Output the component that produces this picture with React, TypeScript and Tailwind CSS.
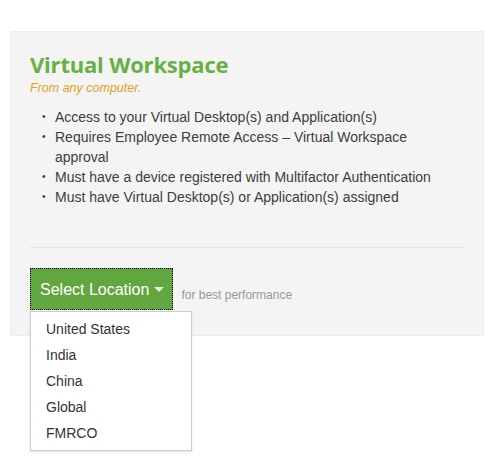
const items = [
  "Access to your Virtual Desktop(s) and Application(s)",
  "Requires Employee Remote Access \u2013 Virtual Workspace approval",
  "Must have a device registered with Multifactor Authentication",
  "Must have Virtual Desktop(s) or Application(s) assigned",
];

const locations = ["United States", "India", "China", "Global", "FMRCO"];

export default function App() {
  return (
    <div className="w-[501px] h-[458px] bg-white pt-[31px] pl-[10px] font-['Liberation_Sans',Arial,sans-serif]">
      <div className="relative w-[474px] h-[305px] bg-[#f4f4f4] border border-[#ececec] px-[19px] pt-[17px]">
        <h2 className="font-['Open_Sans',sans-serif] font-bold text-[22px] leading-[30px] text-[#66b144] tracking-[-0.2px]">
          Virtual Workspace
        </h2>
        <div className="italic text-[12.5px] leading-[14px] text-[#e5a01b] mt-[2px]">From any computer.</div>

        <ul className="mt-[12px] w-[420px] text-[14px] leading-[20px] text-[#3d3d3d]">
          {items.map((t) => (
            <li key={t} className="flex">
              <span className="w-[25px] shrink-0 pl-[12px] text-[10px]">&#8226;</span>
              <span>{t}</span>
            </li>
          ))}
        </ul>

        <div className="mt-[40px] h-px w-[434px] bg-[#e3e3e3]" />

        <div className="mt-[20px] flex items-end">
          <button className="h-[42px] pl-[10px] pr-[9px] pt-[2px] bg-[#62a640] text-white text-[16px] outline-1 outline-dotted outline-black -outline-offset-1 flex items-center gap-[5px]">
            Select Location
            <svg width="10" height="6" viewBox="0 0 10 6">
              <path d="M0 0h10L5 5z" fill="#e8f2e2" />
            </svg>
          </button>
          <span className="ml-[8px] mb-[6px] text-[12px] text-[#999]">for best performance</span>
        </div>

        <div className="absolute left-[19px] top-[279px] w-[162px] bg-white border border-[#cccccc] shadow-sm py-[4px]">
          {locations.map((l) => (
            <div key={l} className="h-[26px] leading-[26px] pl-[15px] text-[14px] text-[#333]">
              {l}
            </div>
          ))}
        </div>
      </div>
    </div>
  );
}
